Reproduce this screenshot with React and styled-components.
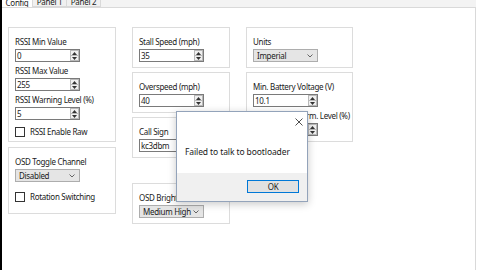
import React from "react";
import styled, { createGlobalStyle } from "styled-components";

const GlobalStyle = createGlobalStyle`
  html, body { margin: 0; padding: 0; background: #ffffff; }
  body { font-family: "Noto Sans", "Open Sans", sans-serif; }
  * { box-sizing: border-box; }
`;

const Root = styled.div`
  position: relative;
  width: 480px;
  height: 270px;
  overflow: hidden;
  border-left: 2px solid #000;
  background: #ffffff;
  display: flex;
  flex-direction: column;
  font-size: 8px;
  letter-spacing: -0.3px;
  color: #1a1a1a;
`;

const TabStrip = styled.div`
  height: 8px;
  flex: none;
  display: flex;
  align-items: flex-end;
  overflow: hidden;
  background: #f3f3f3;
  border-bottom: 1px solid #d9d9d9;
  margin-right: 4px;
`;

const Tab = styled.div`
  height: 10px;
  width: ${(p) => p.$w}px;
  flex: none;
  display: flex;
  align-items: flex-start;
  justify-content: center;
  white-space: nowrap;
  line-height: 10px;
  background: ${(p) => (p.$active ? "#ffffff" : "#f0f0f0")};
  border: 1px solid #d9d9d9;
  border-top: none;
  border-left: ${(p) => (p.$active ? "none" : "1px solid #d9d9d9")};
  margin-left: ${(p) => (p.$active ? "0" : "-1px")};
  margin-bottom: ${(p) => (p.$active ? "-1px" : "0")};
  color: #1a1a1a;
  font-size: 8px;
`;

const Panel = styled.div`
  flex: 1;
  margin-right: 4px;
  border-right: 1px solid #d9d9d9;
  padding: 19px 0 0 6px;
  display: flex;
  align-items: flex-start;
  gap: 16px;
`;

const Column = styled.div`
  display: flex;
  flex-direction: column;
  gap: ${(p) => p.$gap || 4}px;
`;

const Group = styled.div`
  width: ${(p) => p.$w}px;
  border: 1px solid #dcdcdc;
  padding: 9px 6px ${(p) => p.$pb ?? 5}px 6px;
  margin-top: ${(p) => p.$mt || 0}px;
  display: flex;
  flex-direction: column;
`;

const Label = styled.div`
  line-height: 10px;
  height: 10px;
  white-space: nowrap;
  margin-top: ${(p) => p.$mt || 0}px;
  margin-bottom: 2px;
`;

const InputBox = styled.div`
  width: 65px;
  height: 13px;
  border: 1px solid #7a7a7a;
  background: #fff;
  display: flex;
  align-items: stretch;
`;

const InputText = styled.div`
  flex: 1;
  line-height: 11px;
  padding-left: 1px;
  white-space: nowrap;
  overflow: hidden;
`;

const Spin = styled.div`
  width: 10px;
  display: flex;
  flex-direction: column;
  padding: 0 0 0 1px;
`;

const SpinBtn = styled.div`
  flex: 1;
  background: #f0f0f0;
  border: 1px solid #b9b9b9;
  display: flex;
  align-items: center;
  justify-content: center;
  margin-top: ${(p) => (p.$down ? "-1px" : "0")};
`;

const Combo = styled.div`
  width: 65px;
  height: 13px;
  border: 1px solid #adadad;
  background: #e5e5e5;
  display: flex;
  align-items: center;
  justify-content: space-between;
  padding: 0 4px 0 3px;
  line-height: 11px;
  white-space: nowrap;
`;

const CheckRow = styled.div`
  display: flex;
  align-items: center;
  gap: 5px;
  height: 10px;
  line-height: 10px;
  margin-top: ${(p) => p.$mt || 0}px;
  white-space: nowrap;
`;

const CheckBox = styled.div`
  width: 10px;
  height: 10px;
  border: 1px solid #333;
  background: #fff;
`;

const Dialog = styled.div`
  position: absolute;
  left: 174px;
  top: 111px;
  width: 132px;
  height: 91px;
  border: 1px solid #93a3ba;
  background: #fff;
  box-shadow: 0 2px 8px rgba(0, 0, 0, 0.22);
  display: flex;
  flex-direction: column;
`;

const DialogTop = styled.div`
  height: 19px;
  display: flex;
  justify-content: flex-end;
  align-items: center;
  padding-right: 4px;
`;

const Message = styled.div`
  flex: 1;
  padding: 15px 0 0 8px;
  font-size: 8.5px;
  letter-spacing: -0.1px;
  line-height: 12px;
  white-space: nowrap;
`;

const Footer = styled.div`
  height: 28px;
  background: #f0f0f0;
  display: flex;
  justify-content: flex-end;
  padding: 7px 8px 0 0;
`;

const OkButton = styled.div`
  width: 52px;
  height: 13px;
  border: 1px solid #0078d7;
  background: #e1e1e1;
  display: flex;
  align-items: center;
  justify-content: center;
  font-size: 8px;
  line-height: 11px;
`;

const Tri = ({ up }) => (
  <svg width="5" height="3" viewBox="0 0 5 3">
    <path d={up ? "M0 3 L2.5 0 L5 3 Z" : "M0 0 L2.5 3 L5 0 Z"} fill="#333" />
  </svg>
);

const Chevron = () => (
  <svg width="6" height="4" viewBox="0 0 6 4">
    <path d="M0.5 0.5 L3 3 L5.5 0.5" fill="none" stroke="#444" strokeWidth="0.8" />
  </svg>
);

const Spinner = ({ value }) => (
  <InputBox>
    <InputText>{value}</InputText>
    <Spin>
      <SpinBtn>
        <Tri up />
      </SpinBtn>
      <SpinBtn $down>
        <Tri />
      </SpinBtn>
    </Spin>
  </InputBox>
);

const Dropdown = ({ value }) => (
  <Combo>
    <span>{value}</span>
    <Chevron />
  </Combo>
);

const TextInput = ({ value }) => (
  <InputBox>
    <InputText>{value}</InputText>
  </InputBox>
);

export default function App() {
  return (
    <>
      <GlobalStyle />
      <Root>
        <TabStrip>
          <Tab $active $w={31}>Config</Tab>
          <Tab $w={35}>Panel 1</Tab>
          <Tab $w={35}>Panel 2</Tab>
        </TabStrip>
        <Panel>
          <Column $gap={5}>
            <Group $w={108} $pb={4}>
              <Label>RSSI Min Value</Label>
              <Spinner value="0" />
              <Label $mt={4}>RSSI Max Value</Label>
              <Spinner value="255" />
              <Label $mt={4}>RSSI Warning Level (%)</Label>
              <Spinner value="5" />
              <CheckRow $mt={7}>
                <CheckBox />
                RSSI Enable Raw
              </CheckRow>
            </Group>
            <Group $w={108} $pb={11}>
              <Label>OSD Toggle Channel</Label>
              <Dropdown value="Disabled" />
              <CheckRow $mt={10}>
                <CheckBox />
                Rotation Switching
              </CheckRow>
            </Group>
          </Column>
          <Column $gap={4}>
            <Group $w={98}>
              <Label>Stall Speed (mph)</Label>
              <Spinner value="35" />
            </Group>
            <Group $w={98}>
              <Label>Overspeed (mph)</Label>
              <Spinner value="40" />
            </Group>
            <Group $w={98}>
              <Label>Call Sign</Label>
              <TextInput value="kc3dbm" />
            </Group>
            <Group $w={98} $mt={21}>
              <Label>OSD Brightness</Label>
              <Dropdown value="Medium High" />
            </Group>
          </Column>
          <Column $gap={4}>
            <Group $w={107}>
              <Label>Units</Label>
              <Dropdown value="Imperial" />
            </Group>
            <Group $w={107}>
              <Label>Min. Battery Voltage (V)</Label>
              <Spinner value="10.1" />
              <Label $mt={4}>Min Battery Alarm. Level (%)</Label>
              <Spinner value="20" />
            </Group>
          </Column>
        </Panel>
        <Dialog>
          <DialogTop>
            <svg width="8" height="8" viewBox="0 0 8 8">
              <path d="M0.5 0.5 L7.5 7.5 M7.5 0.5 L0.5 7.5" stroke="#222" strokeWidth="0.8" />
            </svg>
          </DialogTop>
          <Message>Failed to talk to bootloader</Message>
          <Footer>
            <OkButton>OK</OkButton>
          </Footer>
        </Dialog>
      </Root>
    </>
  );
}
